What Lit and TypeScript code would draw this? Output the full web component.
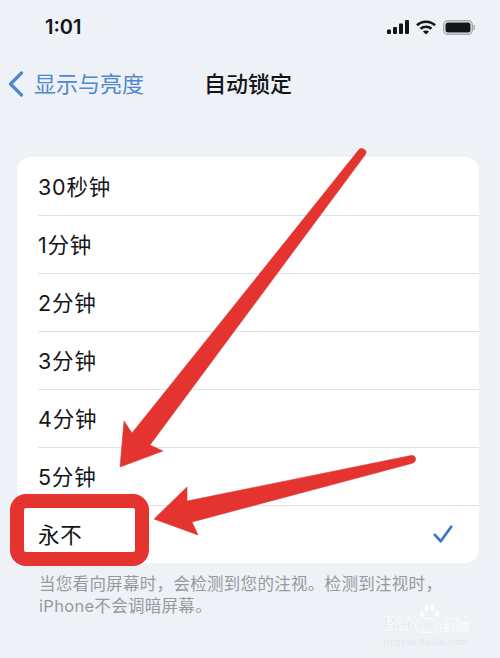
import {html, css, svg, LitElement} from 'lit';
import {customElement} from 'lit/decorators.js';

const OPTIONS = ['30秒钟', '1分钟', '2分钟', '3分钟', '4分钟', '5分钟', '永不'];

@customElement('app-root')
export class AppRoot extends LitElement {
	static styles = css`
		:host {
			display: block;
			position: relative;
			width: 500px;
			height: 658px;
			overflow: hidden;
			background: #eef1f6;
			color: #141518;
			font-family: 'Inter', 'Noto Sans CJK SC', sans-serif;
		}

		.status {
			display: flex;
			align-items: center;
			justify-content: space-between;
			height: 54px;
			padding: 0 25px 0 45px;
			box-sizing: border-box;
		}

		.time {
			font-size: 20px;
			font-weight: 600;
			line-height: 24px;
		}

		.status-icons {
			display: flex;
			align-items: center;
			gap: 7px;
		}

		.nav {
			display: flex;
			align-items: center;
			height: 56px;
			padding-left: 8px;
			font-size: 22px;
		}

		.back {
			display: flex;
			align-items: center;
			gap: 10px;
			width: 196px;
			color: #4f88cf;
		}

		.chevron {
			margin-top: 3px;
		}

		.title {
			font-weight: 500;
			color: #141518;
		}

		.card {
			margin: 47px 21px 0 17px;
			padding-top: 1px;
			background: #fff;
			border-radius: 14px;
			overflow: hidden;
		}

		.row {
			display: flex;
			align-items: center;
			justify-content: space-between;
			height: 58px;
			margin-left: 21px;
			padding: 0 26px 2px 0;
			font-size: 21.5px;
			letter-spacing: 0.8px;
			box-sizing: border-box;
			border-bottom: 1px solid #dfe1e4;
		}

		.row:last-child {
			height: 57px;
			border-bottom: 0;
		}

		.note {
			display: flex;
			flex-direction: column;
			align-items: flex-start;
			margin: 10px 0 0 39px;
			font-size: 16.5px;
			line-height: 22px;
			letter-spacing: 0.3px;
			color: #97999f;
		}

		.marks {
			position: absolute;
			inset: 0;
			pointer-events: none;
		}

		.box {
			position: absolute;
			left: 10px;
			top: 494px;
			width: 111px;
			height: 44px;
			border: 14px solid #e5332f;
			border-radius: 16px;
		}

		.watermark {
			position: absolute;
			left: 383px;
			top: 604px;
			width: 92px;
			color: #e3e6ea;
			pointer-events: none;
		}

		.wm-logo {
			display: flex;
			align-items: center;
			height: 18px;
			margin-top: 11px;
			font-size: 18px;
			font-weight: 700;
			line-height: 18px;
			font-family: 'Liberation Sans', sans-serif;
			-webkit-text-stroke: 0.8px #fbfcfd;
		}

		.wm-paw {
			position: absolute;
			left: 33px;
			top: 0;
		}

		.wm-du {
			width: 20px;
			height: 13px;
			margin: 2px 3px 0 4px;
			border: 1px solid #fbfcfd;
			border-radius: 8px;
			font-size: 11px;
			line-height: 12px;
			text-align: center;
			-webkit-text-stroke: 0.4px #fbfcfd;
		}

		.wm-cjk {
			font-size: 15px;
			font-family: 'Noto Sans CJK SC', sans-serif;
		}

		.wm-url {
			margin-top: 3px;
			font-size: 10px;
			line-height: 12px;
			letter-spacing: 0.6px;
			font-family: 'Liberation Serif', serif;
			color: #e3e6ea;
		}
	`;

	private renderStatusIcons() {
		return html`<div class="status-icons">
			<svg width="22" height="14" viewBox="0 0 22 14" fill="#141518">
				<rect x="0" y="9.5" width="4" height="4.5" rx="1" />
				<rect x="6" y="7" width="4" height="7" rx="1" />
				<rect x="12" y="3.5" width="4" height="10.5" rx="1" />
				<rect x="18" y="0" width="4" height="14" rx="1" />
			</svg>
			<svg width="20" height="15" viewBox="0 0 20 15" fill="none" stroke="#141518" stroke-width="2.6">
				<path d="M1 5.2C6 .6 14 .6 19 5.2" />
				<path d="M4.6 8.8C7.6 6.1 12.4 6.1 15.4 8.8" />
				<path d="M10 14.6 6.9 11.6C8.7 10.2 11.3 10.2 13.1 11.6Z" fill="#141518" stroke="none" />
			</svg>
			<svg width="32" height="15" viewBox="0 0 32 15">
				<rect x=".7" y=".7" width="28.6" height="13.6" rx="4" fill="none" stroke="#a6a8ad" stroke-width="1.4" />
				<rect x="2.5" y="2.5" width="25" height="10" rx="2.5" fill="#141518" />
				<rect x="30.3" y="5" width="1.5" height="5" rx=".7" fill="#a6a8ad" />
			</svg>
		</div>`;
	}

	private renderArrows() {
		return svg`<svg class="marks" width="500" height="658" viewBox="0 0 500 658">
			<path fill="#e5332f" stroke="#d2403e" stroke-width=".6" stroke-linejoin="round"
				d="M359 149.5C360.5 147.5 364 148.500 365.500 150.500C366.500 152 366 153.500 365 155L150 445L163 451L120 467L124 421L132 433Z" />
			<path fill="#e5332f" stroke="#d2403e" stroke-width=".6" stroke-linejoin="round"
				d="M411 455.500C414.500 455 416 457.500 415.500 460C415 462 413.500 463 411.500 463.500L192 522L198 535L154 519L187 487L187 501Z" />
		</svg>`;
	}

	render() {
		return html`
			<div class="status">
				<span class="time">1:01</span>
				${this.renderStatusIcons()}
			</div>
			<div class="nav">
				<div class="back">
					<svg class="chevron" width="16" height="26" viewBox="0 0 16 26" fill="none" stroke="#4f88cf" stroke-width="3.200" stroke-linecap="round" stroke-linejoin="round">
						<path d="M13.500 2 2.500 13l11 11" />
					</svg>
					<span>显示与亮度</span>
				</div>
				<span class="title">自动锁定</span>
			</div>
			<div class="card">
				${OPTIONS.map(
					(label) => html`<div class="row">
						<span>${label}</span>
						${label === '永不'
							? html`<svg width="20" height="20" viewBox="0 0 22 20" fill="none" stroke="#3f76c4" stroke-width="3" stroke-linecap="round" stroke-linejoin="round">
									<path d="M2 11l6.500 7L20 2" />
								</svg>`
							: ''}
					</div>`
				)}
			</div>
			<div class="note">
				<span>当您看向屏幕时，会检测到您的注视。检测到注视时，</span>
				<span>iPhone不会调暗屏幕。</span>
			</div>
			<div class="box"></div>
			${this.renderArrows()}
			<div class="watermark">
				<svg class="wm-paw" width="26" height="16" viewBox="0 0 26 16" fill="#fbfcfd">
					<ellipse cx="6" cy="10" rx="2.500" ry="3" />
					<ellipse cx="10.500" cy="4" rx="2.500" ry="3.500" />
					<ellipse cx="16.500" cy="4" rx="2.500" ry="3.500" />
					<ellipse cx="21" cy="10" rx="2.500" ry="3" />
				</svg>
				<div class="wm-logo">
					<span>Bai</span>
					<span class="wm-du">du</span>
					<span class="wm-cjk">经验</span>
				</div>
				<div class="wm-url">jingyan.baidu.com</div>
			</div>
		`;
	}
}
